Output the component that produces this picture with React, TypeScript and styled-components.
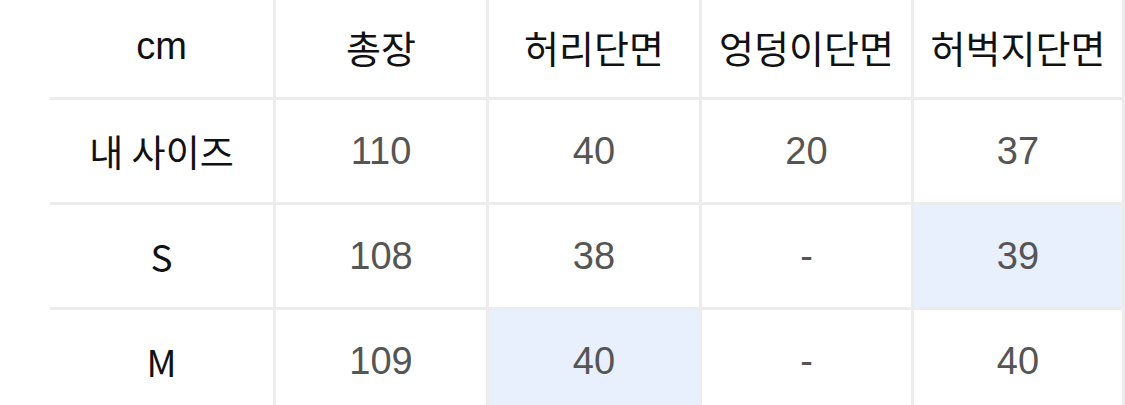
import React from 'react';
import styled, { createGlobalStyle } from 'styled-components';

const GlobalStyle = createGlobalStyle`
  html, body {
    margin: 0;
    padding: 0;
    background: #ffffff;
    overflow: hidden;
  }
  body {
    font-family: 'Liberation Sans', 'Noto Sans CJK KR', sans-serif;
  }
`;

const Page = styled.div`
  width: 1125px;
  height: 405px;
  padding-left: 50px;
  box-sizing: border-box;
  overflow: hidden;
`;

const Grid = styled.div`
  display: grid;
  grid-template-columns: 226px 213px 213px 212px 211px;
  grid-auto-rows: 105px;
  margin-top: -5px;
`;

const Cell = styled.div<{ $head?: boolean; $label?: boolean; $hl?: boolean }>`
  display: flex;
  align-items: center;
  justify-content: center;
  box-sizing: border-box;
  border-right: 3px solid #ececec;
  border-bottom: 3px solid #ececec;
  background: ${(p) => (p.$hl ? '#e8effd' : '#ffffff')};
  font-family: ${(p) =>
    p.$label
      ? "'Noto Sans CJK KR', 'Liberation Sans', sans-serif"
      : "'Liberation Sans', 'Noto Sans CJK KR', sans-serif"};
  font-size: ${(p) => (p.$label ? '37px' : '38px')};
  font-weight: 400;
  color: ${(p) => (p.$head || p.$label ? '#111111' : '#555555')};
  white-space: nowrap;
`;

const headers = ['cm', '총장', '허리단면', '엉덩이단면', '허벅지단면'];

const rows: { label: string; values: string[]; hl?: number }[] = [
  { label: '내 사이즈', values: ['110', '40', '20', '37'] },
  { label: 'S', values: ['108', '38', '-', '39'], hl: 3 },
  { label: 'M', values: ['109', '40', '-', '40'], hl: 1 },
];

export default function App() {
  return (
    <Page>
      <GlobalStyle />
      <Grid>
        {headers.map((h) => (
          <Cell key={h} $head>
            {h}
          </Cell>
        ))}
        {rows.map((r) => (
          <React.Fragment key={r.label}>
            <Cell $label>{r.label}</Cell>
            {r.values.map((v, i) => (
              <Cell key={i} $hl={r.hl === i}>
                {v}
              </Cell>
            ))}
          </React.Fragment>
        ))}
      </Grid>
    </Page>
  );
}
